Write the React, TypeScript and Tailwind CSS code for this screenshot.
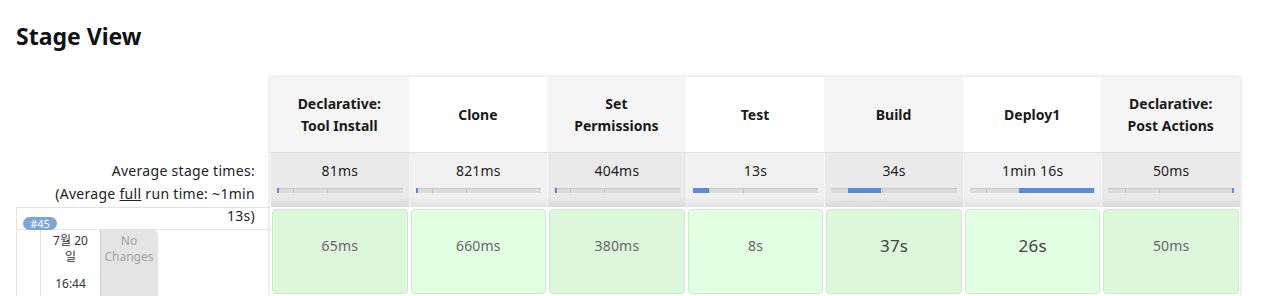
const FONT = { fontFamily: '"Noto Sans", "Noto Sans CJK KR", sans-serif' };

type Stage = {
  name: string[];
  avg: string;
  bar: [number, number];
  run: string;
  big?: boolean;
};

const stages: Stage[] = [
  { name: ["Declarative:", "Tool Install"], avg: "81ms", bar: [0, 1.5], run: "65ms" },
  { name: ["Clone"], avg: "821ms", bar: [0, 1.5], run: "660ms" },
  { name: ["Set", "Permissions"], avg: "404ms", bar: [0.8, 1], run: "380ms" },
  { name: ["Test"], avg: "13s", bar: [0, 13], run: "8s" },
  { name: ["Build"], avg: "34s", bar: [13, 27], run: "37s", big: true },
  { name: ["Deploy1"], avg: "1min 16s", bar: [39, 60], run: "26s", big: true },
  { name: ["Declarative:", "Post Actions"], avg: "50ms", bar: [98.4, 1.6], run: "50ms" },
];

function Bar({ bar }: { bar: [number, number] }) {
  return (
    <div className="relative mx-[6px] mt-[6px] h-[5px] border-t border-[#c9c9c9] bg-[#dcdcdc]">
      <div className="absolute top-0 left-[13%] h-full w-px bg-[#c4c4c4]" />
      <div className="absolute top-0 left-[40%] h-full w-px bg-[#c4c4c4]" />
      <div
        className="absolute top-[-1px] h-[5px] bg-[#5b8dd6]"
        style={{ left: `${bar[0]}%`, width: `${bar[1]}%`, minWidth: 2 }}
      />
    </div>
  );
}

export default function App() {
  return (
    <div className="h-[296px] overflow-hidden bg-white px-4 text-[#222]" style={FONT}>
      <h2 className="pt-[20px] text-[23px] font-bold leading-[32px] text-[#111]">Stage View</h2>

      <div className="mt-[25px] flex">
        {/* left side */}
        <div className="flex w-[254px] flex-col">
          <div className="h-[76px]" />
          <div className="h-[54px] pt-[7px] pr-[15px] pl-[34px] text-right text-[14px] leading-[22.5px] tracking-[0.3px] text-[#222]">
            Average stage times:
            <br />
            (Average <span className="underline">full</span> run time: ~1min 13s)
          </div>
          <div className="h-[90px] border-t border-l border-[#e2e2e2]">
            <div className="flex h-[21px] items-end pl-[6px]">
              <span className="-mb-[1px] flex h-[13px] w-[34px] items-center justify-center rounded-full bg-[#7ea6d4] text-[11px] leading-none text-white">
                #45
              </span>
            </div>
            <div className="flex h-[68px] border-t border-[#e6e6e6] pl-[23px]">
              <div className="w-[60px] border-l border-[#e2e2e2] px-[9px] pt-[3px] text-center text-[12px] leading-[16px] text-[#333]">
                <div>7월 20 일</div>
                <div className="mt-[11px]">16:44</div>
              </div>
              <div className="w-[57px] rounded-tr-[5px] border-l border-[#c9c9c9] bg-[#e4e4e4] pt-[3px] text-center text-[12px] leading-[16px] text-[#a3a3a3] shadow-[1px_0_1px_rgba(0,0,0,0.12)]">
                No
                <br />
                Changes
              </div>
            </div>
          </div>
        </div>

        {/* stage table */}
        <div className="w-[970px] shadow-[0_0_4px_rgba(0,0,0,0.18)]">
          <div className="grid grid-cols-7">
            {stages.map((s, i) => (
              <div
                key={s.avg + i}
                className={
                  "flex h-[76px] flex-col items-center justify-center border-b border-[#dedede] text-center text-[14px] font-bold leading-[22px] text-[#1a1a1a] " +
                  (i % 2 === 0 ? "bg-[#f5f5f5]" : "bg-white")
                }
              >
                {s.name.map((n) => (
                  <div key={n}>{n}</div>
                ))}
              </div>
            ))}
          </div>
          <div className="grid grid-cols-7">
            {stages.map((s, i) => (
              <div
                key={s.avg}
                className={
                  "h-[54px] border-l border-[#f7f7f7] pt-[7px] text-center text-[14px] leading-[22px] tracking-[0.2px] text-[#222] shadow-[inset_0_-10px_8px_-6px_rgba(0,0,0,0.08)] " +
                  (i % 2 === 0 ? "bg-[#eaeaea]" : "bg-[#f1f1f1]")
                }
              >
                {s.avg}
                <Bar bar={s.bar} />
              </div>
            ))}
          </div>
          <div className="grid grid-cols-7 bg-white">
            {stages.map((s, i) => (
              <div key={s.avg + "r"} className="h-[90px] pt-[2px] pr-[1px] pl-[2px]">
                <div
                  className={
                    "h-[85px] rounded-[4px] border border-[#cfe7cf] text-center tracking-[0.2px] " +
                    (i % 2 === 0 ? "bg-[#ddf7dd]" : "bg-[#e3ffe3]") +
                    (s.big
                      ? " pt-[23px] text-[17px] leading-[26px] text-[#444]"
                      : " pt-[26px] text-[14px] leading-[20px] text-[#666]")
                  }
                >
                  {s.run}
                </div>
              </div>
            ))}
          </div>
        </div>
      </div>
    </div>
  );
}
